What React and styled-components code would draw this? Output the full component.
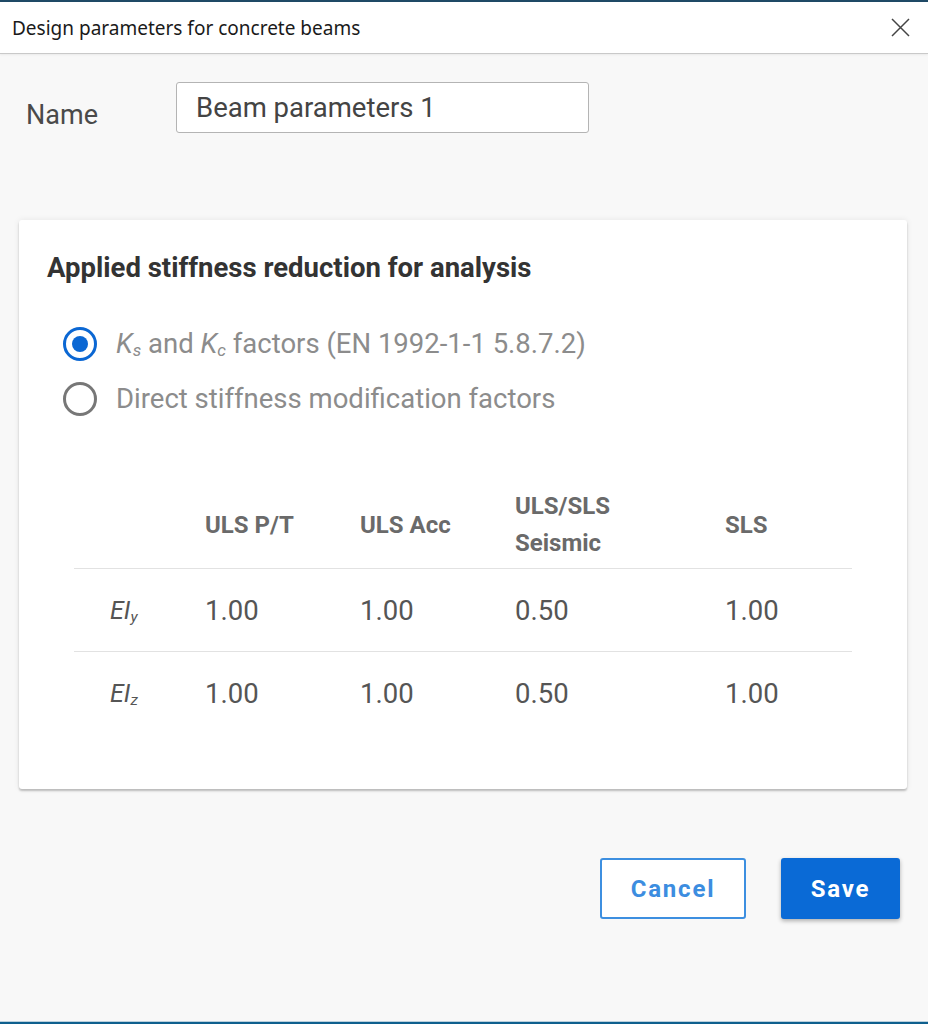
import React from "react";
import styled, { createGlobalStyle } from "styled-components";

const Global = createGlobalStyle`
  html, body { margin: 0; padding: 0; }
  body { background: #f8f8f8; font-family: Roboto, "Liberation Sans", sans-serif; }
  * { box-sizing: border-box; }
`;

const Window = styled.div`
  height: 1024px;
  display: flex;
  flex-direction: column;
  background: #f8f8f8;
`;

const TopStrip = styled.div`
  height: 2px;
  background: #1f4a66;
  flex: none;
`;

const BottomStrip = styled.div`
  height: 3px;
  background: #0e5f8e;
  border-top: 1px solid #b9cfdc;
  flex: none;
`;

const TitleBar = styled.div`
  height: 52px;
  flex: none;
  background: #ffffff;
  border-bottom: 1px solid #c9c9c9;
  box-shadow: 0 1px 2px rgba(0, 0, 0, 0.06);
  display: flex;
  align-items: center;
  justify-content: space-between;
  padding: 0 18px 0 12px;
`;

const Title = styled.div`
  font-family: "Noto Sans", "Open Sans", sans-serif;
  font-size: 19px;
  color: #1a1a1a;
`;

const CloseButton = styled.button`
  border: none;
  background: none;
  padding: 0;
  width: 20px;
  height: 20px;
  display: flex;
  align-items: center;
  justify-content: center;
  cursor: pointer;
`;

const Body = styled.div`
  flex: 1;
  display: flex;
  flex-direction: column;
  padding: 28px 28px 0 19px;
`;

const NameRow = styled.div`
  display: flex;
  align-items: center;
  padding-left: 7px;
`;

const Label = styled.label`
  width: 150px;
  font-size: 27px;
  color: #4a4a4a;
  padding-top: 14px;
`;

const TextInput = styled.input`
  width: 413px;
  height: 51px;
  border: 1.5px solid #b4b4b4;
  border-radius: 3px;
  padding: 0 19px;
  font-family: Roboto, sans-serif;
  font-size: 27.5px;
  color: #444;
  background: #fff;
  outline: none;
`;

const Card = styled.section`
  margin-top: 87px;
  width: 888px;
  height: 569px;
  background: #fff;
  border-radius: 3px;
  box-shadow: 0 2px 2px rgba(0, 0, 0, 0.22), 0 0 6px rgba(0, 0, 0, 0.08);
  padding: 32px 55px 0 28px;
  display: flex;
  flex-direction: column;
`;

const Heading = styled.h2`
  margin: 0;
  font-size: 27.5px;
  font-weight: 700;
  color: #333;
  line-height: 32px;
`;

const RadioGroup = styled.div`
  margin-top: 43px;
  padding-left: 16px;
  display: flex;
  flex-direction: column;
  gap: 21px;
`;

const RadioRow = styled.label`
  display: flex;
  align-items: center;
  gap: 19px;
  font-size: 27.5px;
  color: #8c8c8c;
  line-height: 34px;
`;

const RadioCircle = styled.span`
  width: 34px;
  height: 34px;
  border-radius: 50%;
  border: 3px solid ${(p) => (p.$checked ? "#0b67d3" : "#777")};
  display: flex;
  align-items: center;
  justify-content: center;
  flex: none;
  &::after {
    content: "";
    width: 16px;
    height: 16px;
    border-radius: 50%;
    background: ${(p) => (p.$checked ? "#0b67d3" : "transparent")};
  }
`;

const Sym = styled.i`
  font-style: italic;
`;

const Sub = styled.sub`
  font-size: 0.62em;
  font-style: italic;
  vertical-align: -0.18em;
  line-height: 0;
`;

const Table = styled.div`
  margin-top: 66px;
  margin-left: 27px;
  display: flex;
  flex-direction: column;
`;

const Row = styled.div`
  display: grid;
  grid-template-columns: 131px 155px 155px 210px 1fr;
  align-items: center;
  height: ${(p) => (p.$header ? "87px" : "83px")};
  border-bottom: ${(p) => (p.$last ? "none" : "1.5px solid #e2e2e2")};
`;

const HeadCell = styled.div`
  font-size: 24px;
  font-weight: 700;
  color: #6a6a6a;
  line-height: 37px;
`;

const RowLabel = styled.div`
  padding-left: 36px;
  font-size: 25px;
  font-style: italic;
  color: #555;
`;

const Cell = styled.div`
  font-size: 27.5px;
  color: #555;
`;

const Footer = styled.div`
  margin-top: 69px;
  display: flex;
  justify-content: flex-end;
  gap: 35px;
`;

const Button = styled.button`
  height: 61px;
  width: ${(p) => p.$w}px;
  border-radius: 3px;
  font-family: Roboto, sans-serif;
  font-size: 24px;
  font-weight: 700;
  letter-spacing: 1.8px;
  cursor: pointer;
  border: 2px solid ${(p) => (p.$primary ? "#0a6ad6" : "#3d8fe0")};
  background: ${(p) => (p.$primary ? "#0a6ad6" : "#ffffff")};
  color: ${(p) => (p.$primary ? "#ffffff" : "#3c8de0")};
  box-shadow: ${(p) => (p.$primary ? "0 2px 4px rgba(0,0,0,0.3)" : "none")};
`;

const Spacer = styled.div`
  flex: 1;
`;

const rows = [
  { sub: "y", vals: ["1.00", "1.00", "0.50", "1.00"] },
  { sub: "z", vals: ["1.00", "1.00", "0.50", "1.00"] },
];

export default function App() {
  return (
    <>
      <Global />
      <Window>
        <TopStrip />
        <TitleBar>
          <Title>Design parameters for concrete beams</Title>
          <CloseButton aria-label="Close">
            <svg width="19" height="19" viewBox="0 0 19 19">
              <path d="M1 1 L18 18 M18 1 L1 18" stroke="#444" strokeWidth="1.5" fill="none" />
            </svg>
          </CloseButton>
        </TitleBar>
        <Body>
          <NameRow>
            <Label>Name</Label>
            <TextInput defaultValue="Beam parameters 1" />
          </NameRow>
          <Card>
            <Heading>Applied stiffness reduction for analysis</Heading>
            <RadioGroup>
              <RadioRow>
                <RadioCircle $checked />
                <span>
                  <Sym>K</Sym>
                  <Sub>s</Sub> and <Sym>K</Sym>
                  <Sub>c</Sub> factors (EN 1992-1-1 5.8.7.2)
                </span>
              </RadioRow>
              <RadioRow>
                <RadioCircle />
                <span>Direct stiffness modification factors</span>
              </RadioRow>
            </RadioGroup>
            <Table>
              <Row $header>
                <div />
                <HeadCell>ULS P/T</HeadCell>
                <HeadCell>ULS Acc</HeadCell>
                <HeadCell>
                  ULS/SLS
                  <br />
                  Seismic
                </HeadCell>
                <HeadCell>SLS</HeadCell>
              </Row>
              {rows.map((r, i) => (
                <Row key={r.sub} $last={i === rows.length - 1}>
                  <RowLabel>
                    EI<Sub>{r.sub}</Sub>
                  </RowLabel>
                  {r.vals.map((v, j) => (
                    <Cell key={j}>{v}</Cell>
                  ))}
                </Row>
              ))}
            </Table>
          </Card>
          <Footer>
            <Button $w={146}>Cancel</Button>
            <Button $w={119} $primary>
              Save
            </Button>
          </Footer>
          <Spacer />
        </Body>
        <BottomStrip />
      </Window>
    </>
  );
}
